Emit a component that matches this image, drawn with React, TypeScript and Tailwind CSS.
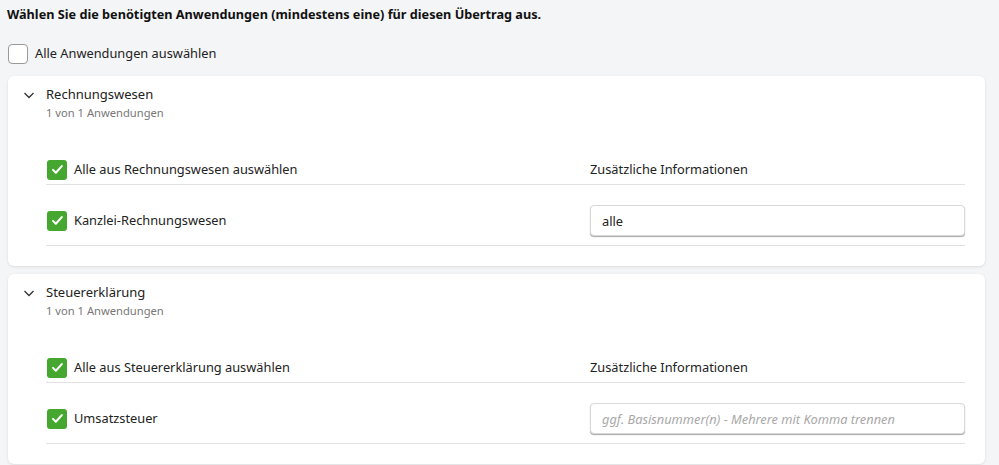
import React from 'react';

const font = { fontFamily: '"Noto Sans", "Open Sans", sans-serif' };

const GreenCheck = () => (
  <span className="flex h-5 w-5 shrink-0 items-center justify-center rounded-[3px] bg-[#45a72f]">
    <svg viewBox="0 0 16 16" className="h-[15px] w-[15px]" fill="none" stroke="white" strokeWidth={2.2} strokeLinecap="round" strokeLinejoin="round">
      <path d="M3.2 8.4l3 3 6.4-7" />
    </svg>
  </span>
);

const Chevron = () => (
  <svg viewBox="0 0 12 12" className="h-3 w-3" fill="none" stroke="#333" strokeWidth={1.3}>
    <path d="M1.5 4l4.5 4.5L10.5 4" />
  </svg>
);

interface SectionProps {
  title: string;
  app: string;
  value?: string;
}

const Section: React.FC<SectionProps> = ({ title, app, value }) => (
  <div className="rounded-md bg-white pb-5 shadow-[0_1px_3px_rgba(0,0,0,0.1)]">
    <div className="flex items-start gap-[11px] px-[15px] pt-[9px]">
      <div className="mt-[4px]">
        <Chevron />
      </div>
      <div>
        <div className="text-[13px] leading-[18px] text-[#222]">{title}</div>
        <div className="mt-px text-[11.2px] leading-[18px] text-[#777]">1 von 1 Anwendungen</div>
      </div>
    </div>

    <div className="mt-[33px] ml-[38px] mr-[20px]">
      <div className="flex h-[30px] items-center border-b border-[#e2e2e2]">
        <div className="flex w-[544px] items-center gap-[7px] pl-px">
          <GreenCheck />
          <span className="text-[12.8px] text-[#222]">Alle aus {title} auswählen</span>
        </div>
        <span className="text-[12.8px] text-[#222]">Zusätzliche Informationen</span>
      </div>
      <div className="flex items-center border-b border-[#e2e2e2] pt-[20px] pb-[9px]">
        <div className="flex w-[544px] items-center gap-[7px] pl-px">
          <GreenCheck />
          <span className="text-[12.8px] text-[#222]">{app}</span>
        </div>
        <input
          readOnly
          value={value ?? ''}
          placeholder="ggf. Basisnummer(n) - Mehrere mit Komma trennen"
          style={font}
          className="h-[31px] flex-1 rounded-[4px] border border-[#d9d9d9] bg-white px-[11px] text-[12.8px] text-[#222] shadow-[0_1px_1px_rgba(0,0,0,0.35)] outline-none placeholder:italic placeholder:text-[#a8a8a8]"
        />
      </div>
    </div>
  </div>
);

export default function App() {
  return (
    <div style={font} className="h-[465px] w-[999px] overflow-hidden bg-[#f4f5f6]">
      <div className="w-[985px] pl-[8px]">
        <div className="-ml-px pt-[5px] text-[12.7px] font-bold leading-[18px] text-[#111]">
          Wählen Sie die benötigten Anwendungen (mindestens eine) für diesen Übertrag aus.
        </div>
        <label className="mt-[21px] flex items-center gap-[7px]">
          <span className="h-5 w-5 rounded-[4px] border border-[#9a9a9a] bg-white" />
          <span className="text-[12.8px] text-[#222]">Alle Anwendungen auswählen</span>
        </label>
        <div className="mt-[12px] flex flex-col gap-2">
          <Section title="Rechnungswesen" app="Kanzlei-Rechnungswesen" value="alle" />
          <Section title="Steuererklärung" app="Umsatzsteuer" />
        </div>
      </div>
    </div>
  );
}
